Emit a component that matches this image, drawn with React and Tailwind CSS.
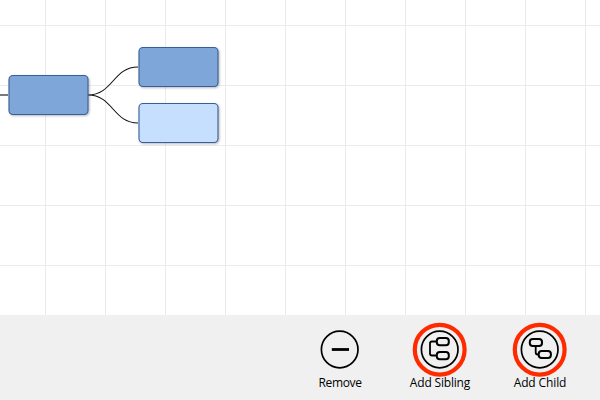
const nodes = [
  { id: "parent", x: 9, y: 75.5, fill: "fill-[#7ea6d9]" },
  { id: "first", x: 139, y: 47.5, fill: "fill-[#7ea6d9]" },
  { id: "second", x: 139, y: 103.5, fill: "fill-[#c7dfff]" },
];

function Remove() {
  return <path d="M31.8 29.5H49" strokeWidth="2.8" />;
}

function Sibling() {
  return (
    <g strokeWidth="2">
      <rect x="36.8" y="17.9" width="12" height="7.4" rx="3" />
      <rect x="36.8" y="31.9" width="12" height="7.4" rx="3" />
      <path d="M37 21.5H32Q30 21.5 30 23.5V33.5Q30 35.5 32 35.5H37" strokeWidth="1.8" />
    </g>
  );
}

function Child() {
  return (
    <g strokeWidth="2">
      <rect x="29.8" y="18.9" width="12.2" height="7.2" rx="3" />
      <rect x="38.7" y="30.9" width="12.2" height="7.2" rx="3" />
      <path d="M35.7 26V32.5Q35.7 34.5 37.7 34.5H39" strokeWidth="1.8" />
    </g>
  );
}

const actions = [
  { label: "Remove", Icon: Remove, ring: false, spacing: "tracking-[-0.35px]" },
  { label: "Add Sibling", Icon: Sibling, ring: true, spacing: "tracking-[-0.18px]" },
  { label: "Add Child", Icon: Child, ring: true, spacing: "tracking-[-0.12px]" },
];

export default function App() {
  return (
    <div className="flex h-[400px] w-[600px] flex-col overflow-hidden bg-white">
      <main className="h-[315px] shrink-0 overflow-hidden bg-white bg-[linear-gradient(to_right,#ebebeb_1px,transparent_1px),linear-gradient(to_bottom,#ebebeb_1px,transparent_1px)] bg-[size:60px_60px] bg-[position:45px_25px]">
        <svg className="block" width="600" height="315" fill="none" stroke="#111" strokeWidth="1.1">
          <path d="M0 95H8" stroke="#333" strokeWidth="1.3" />
          <path d="M88 95C113 95 113 67 138 67M88 95C113 95 113 123 138 123" />
          {nodes.map((n) => (
            <rect
              key={n.id}
              x={n.x}
              y={n.y}
              width="79"
              height="39"
              rx="4"
              stroke="#375f99"
              strokeWidth="1.1"
              className={`drop-shadow-[1px_1px_1px_rgba(0,0,0,0.28)] ${n.fill}`}
            />
          ))}
        </svg>
      </main>
      <footer className="flex h-[85px] shrink-0 justify-end bg-[#f0f0f0] pr-[10px] pt-[5px] font-['Open_Sans','Noto_Sans',sans-serif] text-[12px] text-black">
        {actions.map(({ label, Icon, ring, spacing }) => (
          <button key={label} className="flex w-[100px] flex-col items-center">
            <svg width="80" height="57" viewBox="0 0 80 57" fill="none" stroke="#000" className="overflow-visible">
              {ring && <circle cx="39.7" cy="29.7" r="24.9" stroke="#ff2a00" strokeWidth="4.2" />}
              <circle cx="39.7" cy="29.5" r="18.3" strokeWidth="1.7" />
              <Icon />
            </svg>
            <span className={`mt-[-2px] whitespace-nowrap leading-4 ${spacing}`}>{label}</span>
          </button>
        ))}
      </footer>
    </div>
  );
}
